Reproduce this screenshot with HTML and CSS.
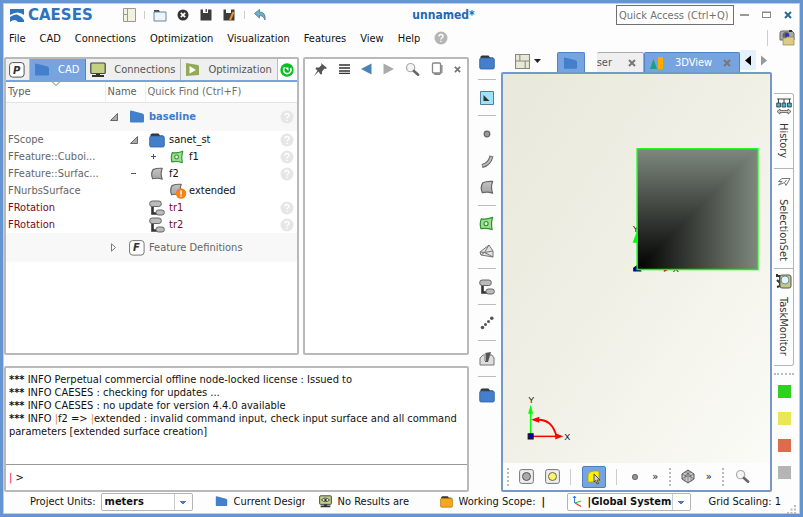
FILE: index.html
```html
<!DOCTYPE html>
<html lang="en">
<head>
<meta charset="utf-8">
<title>CAESES - unnamed*</title>
<link rel="stylesheet" href="styles.css">
</head>
<body>
<svg class="defs" aria-hidden="true">
  <defs>
    <linearGradient id="steel" x1="0" y1="0" x2="0" y2="1"><stop offset="0" stop-color="#c4c4c4"/><stop offset="1" stop-color="#a4a4a4"/></linearGradient>
    <symbol id="scope" viewBox="0 0 16 16"><path d="M1 2.500Q1 1.500 2 1.500L13.500 4.500Q15 5 15 6.500V12.500Q15 13.500 14 13.500H2Q1 13.500 1 12.500Z" fill="#437fcb"/></symbol>
    <symbol id="folder" viewBox="0 0 16 16"><path d="M1.500 6V2.500L3 1.500H9.500L11 3.500H14V6Z" fill="#333"/><rect x=".7" y="4" width="14.600" height="11" rx="1.500" fill="#437fcb" stroke="#2b5f9f" stroke-width=".8"/></symbol>
    <symbol id="folder-gold" viewBox="0 0 16 16"><path d="M1.500 6V2.500L3 1.500H9.500L11 3.500H14V6Z" fill="#333"/><rect x=".7" y="4" width="14.600" height="11" rx="1.500" fill="#f5a81c" stroke="#a86d0a" stroke-width=".8"/></symbol>
    <symbol id="surface" viewBox="0 0 16 16"><path d="M3.500 3Q8 1 14 1.500Q11.500 8 14 14Q9 12 3 13.500Q.5 8 3.500 3Z" fill="url(#steel)" stroke="#666" stroke-width="1.300" stroke-linejoin="round"/></symbol>
    <symbol id="feature" viewBox="0 0 16 16"><path d="M2.500 3Q8 4 14.500 1.500Q12.500 8 14 14.500Q9 12.500 2 13.500Q.5 8 2.500 3Z" fill="#9be08d" stroke="#2f8f35" stroke-width="1.300" stroke-linejoin="round"/><circle cx="7.500" cy="8" r="2.200" fill="#e5f8df" stroke="#2f8f35" stroke-width="1.200"/></symbol>
    <symbol id="transform" viewBox="0 0 16 16"><path d="M3.500 6V13.500H9" fill="none" stroke="#333" stroke-width="2.600"/><rect x=".7" y="1" width="11.600" height="5.500" rx="2.500" fill="#bbb" stroke="#666"/><rect x="7" y="10" width="8.300" height="5" rx="2.300" fill="#bbb" stroke="#666"/></symbol>
    <symbol id="help" viewBox="0 0 14 14"><circle cx="7" cy="7" r="6.500" fill="currentColor"/><path d="M5 5.500Q5 3.500 7 3.500T9 5.300Q9 6.300 7.900 7T7 8.500M7 9.700V11" fill="none" stroke="#fff" stroke-width="1.400"/></symbol>
    <symbol id="screen" viewBox="0 0 16 16"><path d="M6 11h4v2h4v2H2v-2h4z" fill="#333"/><rect x=".8" y="1" width="14.400" height="10.500" rx="1" fill="#c3d183" stroke="#444" stroke-width="1.200"/></symbol>
    <symbol id="magnify" viewBox="0 0 16 16"><circle cx="6" cy="6" r="4.400" fill="#f4f4f4" stroke="#aaa" stroke-width="1.300"/><path d="M9.500 9.500L14 13.500" stroke="#666" stroke-width="2.800" stroke-linecap="round"/></symbol>
    <symbol id="layout" viewBox="0 0 14 14"><path d="M.5.500h13v13H.5z" fill="#e9e8d4" stroke="#888"/><path d="M4.500.5v6M.5 6.500h13M9.500 6.500v7" fill="none" stroke="#888"/></symbol>
    <symbol id="point" viewBox="0 0 16 16"><circle cx="8" cy="8" r="2.800" fill="#999" stroke="#666" stroke-width="1.200"/></symbol>
    <symbol id="close" viewBox="0 0 8 8"><path d="M1 1L7 7M7 1L1 7" stroke="currentColor" stroke-width="2"/></symbol>
  </defs>
</svg>
<div class="window">
  <header>
    <div class="titlebar">
      <div class="brand"><svg width="14" height="13" viewBox="0 0 14 13"><path d="M0 0H14V6Q8 1 0 6Z M0 8Q4 5 7 5.500Q11 7 14 11V13H8Q5 9 0 13Z" fill="#2f73bd"/></svg><span>CAESES</span></div>
      <div class="quickbar">
        <button aria-label="Layout"><svg width="13" height="14" viewBox="0 0 13 14"><path d="M.5.5h12v13H.5z" fill="#f3f1df" stroke="#999"/><path d="M4.500.5v13M.5 6.500h4" stroke="#999"/></svg></button><i class="vline"></i>
        <button aria-label="Open"><svg width="14" height="13" viewBox="0 0 14 13"><path d="M1 3V1h5l1 2h5" fill="#444"/><path d="M1 3h12v9H1z" fill="#edf5fc" stroke="#68869e"/></svg></button>
        <button aria-label="Close project"><svg width="12" height="12" viewBox="0 0 12 12"><circle cx="6" cy="6" r="5.500" fill="#333"/><path d="M3.800 3.800L8.200 8.200M8.200 3.800L3.800 8.200" stroke="#fff" stroke-width="1.700"/></svg></button>
        <button aria-label="Save"><svg width="12" height="12" viewBox="0 0 12 12"><path d="M.5.5H3V4H8V.5h3.500v11H.5Z" fill="#3c3c3c"/><path d="M5.500 0h1.500v3H5.500z" fill="#555"/></svg></button>
        <button aria-label="Save as"><svg width="12" height="12" viewBox="0 0 12 12"><path d="M.5.5H3V4H8V.5h3.500v11H.5Z" fill="#3c3c3c"/><path d="M10.500 3L7 11" stroke="#f09030" stroke-width="2"/></svg></button><i class="vline"></i>
        <button aria-label="Undo"><svg width="13" height="12" viewBox="0 0 13 12"><path d="M.5 4.500L5.500.5V3Q12 3 11 11Q9.500 6.500 5.500 6.500V9Z" fill="#72aec7" stroke="#47798e" stroke-width=".8"/></svg></button>
      </div>
      <h1>unnamed*</h1>
      <input class="quick-access" type="text" aria-label="Quick Access" placeholder="Quick Access (Ctrl+Q)">
      <div class="window-buttons">
        <button aria-label="Minimize"><svg width="10" height="10"><path d="M0 5h9" stroke="#999" stroke-width="2"/></svg></button>
        <button aria-label="Maximize"><svg width="10" height="10"><rect x=".5" y="2.500" width="8" height="5" fill="none" stroke="#888"/><path d="M0 2h9" stroke="#888"/></svg></button>
        <button class="exit" aria-label="Close"><svg width="8" height="8"><use href="#close"/></svg></button>
      </div>
    </div>
    <div class="menubar">
      <nav><button>File</button><button>CAD</button><button>Connections</button><button>Optimization</button><button>Visualization</button><button>Features</button><button>View</button><button>Help</button><button class="menu-help" aria-label="Context help"><svg width="14" height="14"><use href="#help"/></svg></button></nav>
      <i class="vline tall"></i>
      <button class="shot" aria-label="Screenshot"><svg width="16" height="16" viewBox="0 0 16 16"><path d="M1 3Q1 1 3 1h10l2 2v7H1z" fill="#aaa" stroke="#666"/><circle cx="7" cy="5.500" r="3.500" fill="#666"/><circle cx="8" cy="5" r="2" fill="#2435c8"/><path d="M10 0h3v2h-3z" fill="#333"/><path d="M4 8h3l1-1h7v8H4z" fill="#dccb85" stroke="#94834a" stroke-width=".7"/></svg></button>
    </div>
  </header>

  <main>
    <div class="left">
      <section class="panel browser">
        <div class="tabs">
          <button class="tab project" aria-label="Project"><svg width="16" height="16" viewBox="0 0 16 16"><rect x=".6" y=".6" width="14.500" height="14.500" rx="3" fill="#fff" stroke="#555"/><text class="letter" x="4" y="12">P</text></svg></button>
          <button class="tab active"><svg width="16" height="16"><use href="#scope"/></svg>CAD</button>
          <button class="tab"><svg width="16" height="16"><use href="#screen"/></svg>Connections</button>
          <button class="tab"><svg width="15" height="14" viewBox="0 0 15 14"><path d="M1 0L13 2Q14 2 14 4V12L1 13Z" fill="#94a957"/><path d="M4.500 3L11 7L4.500 10.500Z" fill="#fff"/></svg>Optimization</button>
          <button class="tab refresh" aria-label="Refresh"><svg width="14" height="14" viewBox="0 0 14 14"><circle cx="7" cy="7" r="6.700" fill="#05bf22"/><path d="M4.500 4Q2.500 8 5 9.800T9.800 9.500T10.500 5" fill="none" stroke="#fff" stroke-width="1.500"/><path d="M5 4.500L8.500 8V4.500Z" fill="#fff"/></svg></button>
        </div>
        <table>
          <colgroup><col class="c-type"><col class="c-name"><col><col class="c-help"></colgroup>
          <thead><tr><th>Type<svg class="sort" width="8" height="4" viewBox="0 0 8 4"><path d="M.5 0L4 3.500L7.500 0" fill="none" stroke="#777"/></svg></th><th>Name</th><th colspan="2"><input type="text" aria-label="Quick Find" placeholder="Quick Find (Ctrl+F)"></th></tr></thead>
          <tbody>
            <tr class="group"><td></td><td colspan="2"><div class="node"><i class="tw"><svg width="8" height="8"><path d="M7.500 .5V7.500H.5Z" fill="#aaa" stroke="#666"/></svg></i><svg class="ic" width="16" height="16"><use href="#scope"/></svg><b>baseline</b></div></td><td class="q"><svg width="14" height="14"><use href="#help"/></svg></td></tr>
            <tr><td>FScope</td><td colspan="2"><div class="node l1"><i class="tw"><svg width="8" height="8"><path d="M7.500 .5V7.500H.5Z" fill="#aaa" stroke="#666"/></svg></i><svg class="ic" width="16" height="16"><use href="#folder"/></svg>sanet_st</div></td><td class="q"><svg width="14" height="14"><use href="#help"/></svg></td></tr>
            <tr><td>FFeature::Cuboi...</td><td colspan="2"><div class="node l2"><i class="tw"><svg width="7" height="7"><path d="M1 3.500h5M3.500 1v5" stroke="#555"/></svg></i><svg class="ic" width="16" height="14"><use href="#feature"/></svg>f1</div></td><td class="q"><svg width="14" height="14"><use href="#help"/></svg></td></tr>
            <tr><td>FFeature::Surfac...</td><td colspan="2"><div class="node l1"><i class="tw"><svg width="7" height="7"><path d="M1 3.500h5" stroke="#555"/></svg></i><svg class="ic" width="16" height="14"><use href="#surface"/></svg>f2</div></td><td class="q"><svg width="14" height="14"><use href="#help"/></svg></td></tr>
            <tr><td>FNurbsSurface</td><td colspan="2"><div class="node l2"><i class="tw"></i><svg class="ic warn" width="18" height="16" viewBox="0 0 18 16"><use href="#surface" width="14" height="14"/><circle cx="12" cy="10.500" r="5.200" fill="#f58212"/><path d="M12 7.500v4M12 12.500v1.300" stroke="#fff" stroke-width="1.500"/></svg>extended</div></td><td></td></tr>
            <tr class="red"><td>FRotation</td><td colspan="2"><div class="node l1"><i class="tw"></i><svg class="ic" width="16" height="16"><use href="#transform"/></svg>tr1</div></td><td class="q"><svg width="14" height="14"><use href="#help"/></svg></td></tr>
            <tr class="red"><td>FRotation</td><td colspan="2"><div class="node l1"><i class="tw"></i><svg class="ic" width="16" height="16"><use href="#transform"/></svg>tr2</div></td><td class="q"><svg width="14" height="14"><use href="#help"/></svg></td></tr>
            <tr class="group"><td></td><td colspan="2"><div class="node muted"><i class="tw"><svg width="7" height="9"><path d="M1.500 .8L5.500 4.500L1.500 8.200Z" fill="#fff" stroke="#777"/></svg></i><svg class="ic" width="16" height="16" viewBox="0 0 16 16"><rect x=".6" y=".6" width="14.500" height="14.500" rx="3" fill="#fff" stroke="#777"/><text class="letter" x="4" y="11">F</text></svg>Feature Definitions</div></td><td></td></tr>
          </tbody>
        </table>
      </section>
      <section class="panel editor">
        <div class="tools">
          <button aria-label="Pin"><svg width="15" height="15" viewBox="0 0 15 15"><path d="M8 1L14 6L12.500 7L11.500 6.500L9 9.500L9 12L7.500 12.500L5.500 9.500L1 14L4.500 8.500L2.500 7L3 5.500L6 5.500L8.500 3Z" fill="#555"/></svg></button>
          <button aria-label="Menu"><svg width="11" height="10"><path d="M0 1h11M0 4h11M0 7h11M0 9.500h11" stroke="#333" stroke-width="1.400"/></svg></button>
          <button aria-label="Back"><svg width="11" height="12"><path d="M0 6L10.500.5v11Z" fill="#4c82b8"/></svg></button>
          <button aria-label="Forward"><svg width="11" height="12"><path d="M11 6L.5.500v11Z" fill="#aaa"/></svg></button>
          <button aria-label="Search"><svg width="15" height="15"><use href="#magnify"/></svg></button>
          <button aria-label="Copy"><svg width="12" height="14" viewBox="0 0 12 14"><path d="M3.500 3V12.500H9L11 10.500V3" fill="#aaa" stroke="#888"/><rect x="1.500" y="1" width="8" height="10" rx="1" fill="#fff" stroke="#888" stroke-width="1.300"/></svg></button>
          <button aria-label="Close panel"><svg width="7" height="7"><use href="#close"/></svg></button>
        </div>
      </section>
      <section class="panel console">
        <div class="log">
          <p><b>***</b> INFO Perpetual commercial offline node-locked license : Issued to</p>
          <p><b>***</b> INFO CAESES : checking for updates ...</p>
          <p><b>***</b> INFO CAESES : no update for version 4.4.0 available</p>
          <p><b>***</b> INFO <em>|</em>f2 =&gt; <em>|</em>extended : invalid command input, check input surface and all command parameters [extended surface creation]</p>
        </div>
        <label class="prompt"><span><em>|</em> &gt;</span><input type="text" aria-label="Command"></label>
      </section>
    </div>

    <div class="create">
      <button aria-label="Scope"><svg width="16" height="16"><use href="#folder"/></svg></button><hr>
      <button aria-label="Image"><svg width="14" height="14" viewBox="0 0 14 14"><path d="M.5.5h13v13H.5z" fill="#9de3f7" stroke="#557f96"/><path d="M3.500 4v6h6z" fill="#333"/></svg></button><hr>
      <button aria-label="Point"><svg width="16" height="16"><use href="#point"/></svg></button>
      <button aria-label="Curve"><svg width="14" height="14" viewBox="0 0 14 14"><path d="M2 12Q9.500 10.500 11.500 2" fill="none" stroke="#666" stroke-width="4"/><path d="M2.500 11.800Q9.500 10 11.300 2.700" fill="none" stroke="#bbb" stroke-width="2"/></svg></button>
      <button aria-label="Surface"><svg width="16" height="15"><use href="#surface"/></svg></button><hr>
      <button aria-label="Feature"><svg width="15" height="15"><use href="#feature"/></svg></button>
      <button aria-label="Mesh"><svg width="15" height="14" viewBox="0 0 15 14"><path d="M1 8L10 1L14 7V13L2 11Z" fill="#e2e2e2" stroke="#777" stroke-linejoin="round"/><path d="M1 8L5.500 8.500L14 13M5.500 8.500L10 1M5.500 8.500L14 7M2 11L5.500 8.500" fill="none" stroke="#777"/></svg></button><hr>
      <button aria-label="Transformation"><svg width="16" height="16"><use href="#transform"/></svg></button><hr>
      <button aria-label="Points"><svg width="14" height="14"><g fill="#555"><circle cx="2.500" cy="11.500" r="1.800"/><circle cx="5.500" cy="8.500" r="1.500"/><circle cx="8.500" cy="5.500" r="1.500"/><circle cx="11.800" cy="2.300" r="1.800"/></g></svg></button><hr>
      <button aria-label="Solid"><svg width="16" height="15" viewBox="0 0 16 15"><path d="M1 7L4 4H13L15 7V14H1Z" fill="#ddd" stroke="#777" stroke-linejoin="round"/><path d="M6 2L12 1L9 11H6Z" fill="#555"/><path d="M5 3L7 2V10H5Z" fill="#aaa"/></svg></button><hr>
      <button aria-label="Group"><svg width="16" height="16"><use href="#folder"/></svg></button>
    </div>

    <section class="viewer">
      <div class="viewtabs">
        <button class="split" aria-label="Split view"><svg width="15" height="15"><use href="#layout"/></svg><svg width="7" height="4"><path d="M0 0h7L3.500 4z" fill="#222"/></svg></button>
        <button class="vt scope on" aria-label="Scope view"><svg width="15" height="15"><use href="#scope"/></svg></button>
        <button class="vt cut"><span>Browser</span><svg width="8" height="8"><use href="#close"/></svg></button>
        <button class="vt on wide"><svg width="14" height="14"><path d="M0 13L3.500 3L7 13Z" fill="#1ba087"/><path d="M8 1h5v12H8z" fill="#ffab08"/></svg><span>3DView</span><svg width="8" height="8"><use href="#close"/></svg></button>
        <button class="scroll hot" aria-label="Scroll left"><svg width="7" height="11"><path d="M0 5.500L6 .5v10z" fill="#000"/></svg></button>
        <button class="scroll" aria-label="Scroll right"><svg width="7" height="11"><path d="M6 5.500L0 .5v10z" fill="#999"/></svg></button>
      </div>
      <div class="viewport">
        <div class="scene">
          <svg viewBox="0 0 266 387" preserveAspectRatio="xMinYMid meet" role="img" aria-label="3D scene">
            <defs>
              <linearGradient id="fv" x1="0" y1="0" x2="0" y2="1"><stop offset="0" stop-color="#7e887d"/><stop offset="1" stop-color="#000"/></linearGradient>
              <linearGradient id="fh" x1="0" y1="0" x2="1" y2="0"><stop offset="0" stop-color="#000"/><stop offset="1" stop-color="#7e887d"/></linearGradient>
            </defs>
            <text class="axis" x="129" y="157">Y</text><path d="M133 157L129 168H134Z" fill="#0f0"/>
            <path d="M130 196V193L133 191L137 196Z" fill="#0000d0" stroke="#112"/><path d="M160 192L166 194L160 197Z" fill="#f00"/><text class="axis" x="169" y="197">X</text>
            <rect x="133.500" y="74.500" width="120" height="120" fill="url(#fv)"/><path d="M133.500 194.500H253.500V74.500Z" fill="url(#fh)"/>
            <rect x="133.500" y="74.500" width="120" height="120" fill="none" stroke="#0f0" stroke-width="1.500"/>
            <path d="M27.500 360V337" stroke="#0f0" stroke-width="1.500"/><path d="M27.500 329L25 338H30Z" fill="#0f0"/>
            <path d="M28 360.500H53" stroke="#f00" stroke-width="1.500"/><path d="M60 360.500L52 357.500V363.500Z" fill="#f00"/>
            <path d="M35 344Q49 344 53 360" fill="none" stroke="#f00" stroke-width="1.800"/><path d="M28 344L36 341V347Z" fill="#f00"/>
            <path d="M25 358h5v5h-5z" fill="#0000d8" stroke="#111"/><text class="axis" x="25" y="327">Y</text><text class="axis" x="61" y="364">X</text>
          </svg>
        </div>
        <div class="viewtools">
          <i class="grip"></i>
          <button aria-label="Solid display"><svg width="15" height="15"><rect x=".6" y=".6" width="13.800" height="13.800" rx="2" fill="#eee" stroke="#777"/><circle cx="7.500" cy="7.500" r="4" fill="#aaa" stroke="#555"/></svg></button>
          <button aria-label="Light"><svg width="15" height="15"><rect x=".6" y=".6" width="13.800" height="13.800" rx="2" fill="#eee" stroke="#777"/><circle cx="7.500" cy="7.500" r="4" fill="#fcf668" stroke="#665"/></svg></button>
          <i class="vline tall"></i>
          <button class="pressed" aria-label="Select"><svg width="16" height="16"><path d="M2 13V6Q3 2 8 2H13V13Z" fill="#fff000" stroke="#a79b1b" stroke-width=".7"/><path d="M8 5L14 11H11L12.500 14.500L11 15L9.500 11.500L8 13Z" fill="#ccd5df" stroke="#333" stroke-width=".8"/></svg></button>
          <i class="vline tall"></i>
          <button aria-label="Points"><svg width="14" height="14"><use href="#point"/></svg></button>
          <button class="more">»</button>
          <i class="grip"></i>
          <button aria-label="Cube view"><svg width="14" height="15" viewBox="0 0 14 15"><path d="M7 1L13 5V10L7 14L1 10V5Z" fill="#ccc" stroke="#555"/><path d="M1 5L7 8L13 5M7 8V14M1 10L7 6L13 10M7 1V6M4 3L10 6.500V12M10 3L4 6.500V12" fill="none" stroke="#555" stroke-width=".6"/></svg></button>
          <button class="more">»</button>
          <i class="grip"></i>
          <button aria-label="Zoom"><svg width="15" height="15"><use href="#magnify"/></svg></button>
        </div>
      </div>
    </section>

    <aside>
      <div class="sidetabs">
        <button class="history"><svg width="16" height="17" viewBox="0 0 16 17"><path d="M1 1h14M2.500 1v5M8 1v5M13.500 1v5" stroke="#444"/><path d="M.7 5h3.800v4H.7zM6 5h3.800v4H6zM11.500 5h3.800v4h-3.800z" fill="#44b5cc" stroke="#333" stroke-width=".8"/><path d="M1 13.500L4 11v1.500h8V11l3 2.500L12 16v-1.500H4V16Z" fill="#ccc" stroke="#555" stroke-width=".8"/></svg><span>History</span></button>
        <button class="selection"><svg width="14" height="10" viewBox="0 0 14 10"><path d="M5 1.500H13L9 8.500L7.500 5.500L1.500 8L5 4.500H1.500L5 1.500M7.500 5.500L9.500 3" fill="#fff" stroke="#777"/></svg><span>SelectionSet</span></button>
        <button class="task"><svg width="16" height="16" viewBox="0 0 16 16"><path d="M1 1V3H4V13L1 14M1 7L5 11" stroke="#333" stroke-width="2" fill="none"/><rect x="4" y="2" width="11" height="13" rx="2" fill="#bfca87" stroke="#555"/><circle cx="9" cy="7" r="4" fill="#e1f6fb" stroke="#789"/></svg><span>TaskMonitor</span></button>
      </div>
      <div class="swatches"><i class="green"></i><i class="yellow"></i><i class="coral"></i><i class="gray"></i></div>
    </aside>
  </main>

  <footer>
    <label for="units">Project Units:</label>
    <div class="pick units"><select id="units"><option>meters</option></select></div>
    <span class="item design"><svg width="13" height="13"><use href="#scope"/></svg><span>Current Design</span></span>
    <span class="item results"><svg width="13" height="13" viewBox="0 0 16 16"><use href="#screen"/><path d="M3 6Q8 1.500 13 6Q8 10.500 3 6Z" fill="#eee" stroke="#333"/><circle cx="8" cy="6" r="1.500" fill="#333"/></svg><span>No Results are</span></span>
    <span class="item working"><svg width="13" height="13"><use href="#folder-gold"/></svg><span>Working Scope:</span><b>|</b></span>
    <div class="pick system"><svg width="13" height="13"><path d="M2.500 8V1M1 3L2.500 1L4 3" stroke="#2979e8" fill="none"/><path d="M3 8L9 11.500" stroke="#e33" stroke-width="1.300"/><path d="M3 8L9 6" stroke="#2c4" stroke-width="1.300"/></svg><select aria-label="Coordinate system"><option>|Global System</option></select></div>
    <span class="scaling">Grid Scaling: 1</span>
    <svg class="resize" width="9" height="9"><path d="M7 0h2v2H7zM7 3.500h2v2H7zM7 7h2v2H7zM3.500 3.500h2v2h-2zM3.500 7h2v2h-2zM0 7h2v2H0z" fill="#bbb"/></svg>
  </footer>
</div>
</body>
</html>
```

FILE: styles.css
```css
* { box-sizing: border-box; }
body { margin: 0; font: 11px/13px "DejaVu Sans Condensed", "DejaVu Sans", sans-serif; color: #111; }
button, input, select { font: inherit; color: inherit; }
button { display: flex; align-items: center; justify-content: center; padding: 0; border: 0; background: none; }
svg { display: block; flex: none; }
p, h1 { margin: 0; }
.defs { position: absolute; width: 0; height: 0; }
input::placeholder { color: #707070; opacity: 1; }

.window { display: flex; flex-direction: column; height: 100vh; min-height: 500px; border: 3px solid #6594d2; box-shadow: inset 0 0 0 1px #b8cfed; background: #fdfdfd; overflow: hidden; }
.vline { flex: none; width: 1px; height: 8px; background: #ccc; }
.vline.tall { height: 16px; }

.titlebar { display: flex; align-items: center; height: 24px; padding: 0 8px 0 7px; }
.brand { display: flex; align-items: center; gap: 4px; width: 111px; color: #2f73bd; font: bold 15px/16px "DejaVu Sans", sans-serif; }
.quickbar { display: flex; align-items: center; gap: 7px; }
.quickbar button { width: 16px; }
.titlebar h1 { flex: 1; padding-left: 3px; color: #2268b7; font-size: 12px; text-align: center; }
.quick-access { width: 118px; height: 20px; padding: 0 2px; border: 1px solid #707070; background: #fff; }
.window-buttons { display: flex; align-items: center; gap: 12px; padding-left: 6px; }
.exit { color: #286b91; }

.menubar { display: flex; align-items: center; height: 22px; margin-bottom: 8px; padding: 0 5px 0 6px; }
.menubar nav { display: flex; flex: 1; gap: 14px; }
.menu-help { color: #b5b5b5; }
.menubar .shot { margin-left: 11px; }

main { display: grid; grid-template-columns: minmax(0, 464fr) 32px minmax(0, 271fr) 28px; flex: 1; min-height: 0; padding-left: 1px; }
.left { display: grid; grid-template: minmax(0, 297fr) minmax(0, 126fr) / minmax(0, 295fr) minmax(0, 166fr); gap: 11px 4px; }
.panel { min-width: 0; border: 2px solid #b9b9b9; border-radius: 2px; background: #fff; overflow: hidden; }
.console { grid-column: 1 / 3; }

.tabs { display: flex; height: 23px; border-bottom: 2px solid #77a4df; background: #efefef; }
.tab { gap: 8px; padding: 0 5px 0 4px; border-right: 1px solid #bbb; color: #555; }
.tab.project { padding: 0 4px 0 3px; }
.tab.active { padding: 0 6px 0 4px; border-color: #4d84cf; background: #77a4df; color: #fff; }
.tab.refresh { flex: 1; padding: 0 1px; border: 0; background: #fff; }
.letter { fill: #333; font: italic bold 10px "DejaVu Sans", sans-serif; }

table { width: 100%; border-collapse: collapse; table-layout: fixed; }
.c-type { width: 99px; }
.c-name { width: 40px; }
.c-help { width: 17px; }
th, td { padding: 0; font-weight: normal; text-align: left; white-space: nowrap; }
th { position: relative; height: 20px; padding: 0 2px; border-right: 1px solid #eee; border-bottom: 1px solid #e4e4e4; color: #606060; }
th:last-child { border-right: 0; }
th input { width: 100%; padding: 0; border: 0; background: none; }
.sort { position: absolute; top: 0; left: 46px; }
td { height: 17px; color: #666; }
td:first-child { padding-left: 2px; overflow: hidden; }
.group td { height: 29px; background: #f8f8f8; }
.node { display: flex; align-items: center; padding-left: 5px; color: #111; }
.node.l1 { padding-left: 25px; }
.node.l2 { padding-left: 45px; }
.tw { width: 19px; }
.ic { margin-right: 4px; }
.ic.warn { margin-right: 2px; }
.node b { color: #3b7ccb; }
.node.muted { color: #666; }
.red td, .red .node { color: #7c0815; }
tr .q { color: #e6e6e6; }

.tools { display: flex; align-items: center; justify-content: space-between; height: 20px; padding: 0 6px 0 8px; color: #777; }

.console { display: flex; flex-direction: column; }
.log { flex: 1; padding: 5px 3px; }
.console em { color: #e58b2b; font-style: normal; }
.console .prompt em { color: #f0104c; }
.prompt { display: flex; align-items: center; height: 26px; border-top: 1px solid #999; padding-left: 3px; }
.prompt input { flex: 1; min-width: 0; border: 0; outline: 0; }

.create { display: flex; flex-direction: column; align-items: center; padding-left: 4px; margin-top: -9px; }
.create button { width: 26px; height: 27px; }
.create hr { width: 18px; height: 1px; margin: 4px 0; border: 0; background: #bbb; }

.viewer { display: flex; flex-direction: column; min-width: 0; margin-top: -7px; }
.viewtabs { display: flex; align-items: flex-end; height: 22px; }
.split { gap: 4px; width: 56px; height: 22px; padding-right: 2px; }
.vt { height: 20px; border: 1px solid #aaa; border-bottom: 0; color: #555; background: #efefef; border-radius: 2px 2px 0 0; }
.vt.on { border-color: #4e83cb; background: #77a4df; color: #fff; }
.vt svg:last-child { color: #777; }
.vt.scope { width: 28px; margin-right: 12px; }
.vt.scope svg { margin-bottom: -2px; }
.vt.cut { flex: 1; justify-content: flex-end; gap: 16px; min-width: 0; padding-right: 7px; border-left: 0; overflow: hidden; }
.vt.wide { justify-content: space-between; width: 96px; padding: 0 8px 0 5px; }
.scroll { width: 16px; height: 20px; margin-bottom: 2px; }
.scroll.hot { background: #e2f1fc; }
.viewport { display: flex; flex-direction: column; flex: 1; min-height: 0; border: 2px solid #7398c9; border-radius: 2px; }
.scene { flex: 1; min-height: 0; background: linear-gradient(125deg, #e9e8dc, #f0efe5 45%, #fbfbf7); }
.scene svg { width: 100%; height: 100%; }
.axis { fill: #111; font: 9px "Liberation Sans", sans-serif; }
.viewtools { display: flex; align-items: center; justify-content: space-between; height: 27px; padding: 0 20px 0 4px; }
.grip { height: 18px; border-left: 2px dotted #bbb; }
.pressed { width: 24px; height: 22px; border: 1px solid #4b7fc5; border-radius: 2px; background: #77a4df; }

aside { display: flex; flex-direction: column; padding: 36px 6px 0 2px; }
.sidetabs { border: 1px solid #b5b5b5; border-left: 0; border-radius: 0 3px 3px 0; }
.sidetabs button { flex-direction: column; justify-content: flex-start; gap: 8px; width: 100%; padding-top: 4px; color: #333; }
.sidetabs button + button { border-top: 1px solid #b5b5b5; }
.sidetabs span { writing-mode: vertical-rl; }
.history { height: 74px; }
.selection { height: 100px; }
.selection svg { margin: 4px 0; }
.task { height: 97px; }
.swatches { display: flex; flex-direction: column; align-items: center; gap: 14px; margin-top: 7px; padding-top: 10px; border-top: 2px dotted #bbb; }
.swatches i { width: 13px; height: 13px; }
.green { background: #30d020; }
.yellow { background: #e9e657; }
.coral { background: #dc6c4c; }
.gray { background: #b5b5b5; }

footer { display: flex; align-items: center; height: 25px; padding: 0 4px 0 27px; white-space: nowrap; }
.pick { position: relative; display: flex; align-items: center; height: 18px; border: 1px solid #b5b5b5; border-radius: 2px; background: #fff; font-weight: bold; }
.pick select { flex: 1; min-width: 0; height: 16px; margin-right: 17px; padding: 0; border: 0; appearance: none; background: none; }
.pick::after { content: ""; position: absolute; top: 0; right: 0; width: 17px; height: 16px; border-left: 1px solid #ccc; background: linear-gradient(#5077b8, #5077b8) 5px 7px / 6px 1px no-repeat, linear-gradient(#5077b8, #5077b8) 6px 8px / 4px 1px no-repeat, linear-gradient(#5077b8, #5077b8) 7px 9px / 2px 1px no-repeat; pointer-events: none; }
.units { width: 92px; margin: 0 22px 0 5px; padding-left: 3px; }
.item { display: flex; align-items: center; gap: 6px; }
.item span { overflow: hidden; }
.design { width: 90px; margin-right: 14px; }
.results { width: 92px; margin-right: 29px; }
.working { width: 106px; margin-right: 21px; }
.system { gap: 3px; width: 124px; padding-left: 4px; }
.scaling { flex: 1; margin-left: 18px; }
.resize { align-self: flex-end; }
```
